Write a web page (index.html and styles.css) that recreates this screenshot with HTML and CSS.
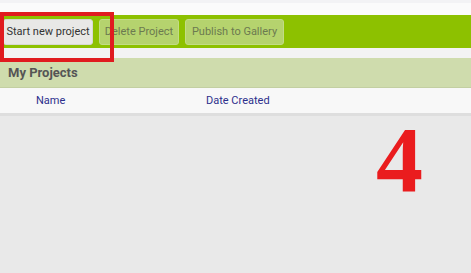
FILE: index.html
```html
<!DOCTYPE html>
<html>
<head>
<meta charset="utf-8">
<link rel="stylesheet" href="styles.css">
</head>
<body>
<div class="page">
  <div class="topstrip"></div>
  <div class="toolbar">
    <button class="btn btn-active">Start new project</button>
    <button class="btn btn-disabled">Delete Project</button>
    <button class="btn btn-disabled">Publish to Gallery</button>
  </div>
  <div class="spacer"></div>
  <div class="section-head">My Projects</div>
  <div class="table-head">
    <span class="col col-name">Name</span>
    <span class="col col-date">Date Created</span>
  </div>
  <div class="content"></div>
  <div class="highlight"></div>
  <div class="step">4</div>
</div>
</body>
</html>
```
FILE: styles.css
```css
html, body {
  margin: 0;
  padding: 0;
}
body {
  background: #e9e9e9;
  font-family: Roboto, "Noto Sans", sans-serif;
  width: 471px;
  height: 273px;
  overflow: hidden;
}
.page {
  position: relative;
  height: 273px;
  display: flex;
  flex-direction: column;
}
.topstrip {
  height: 15px;
  background: #fbfbfb;
  border-top: 3px solid #f3f3f5;
  box-sizing: border-box;
}
.toolbar {
  height: 33px;
  background: #8dc100;
  display: flex;
  align-items: center;
  gap: 6px;
  padding-left: 3px;
  box-sizing: border-box;
}
.btn {
  height: 26px;
  font-family: Roboto, "Noto Sans", sans-serif;
  font-size: 11px;
  border-radius: 3px;
  padding: 0;
  margin: 0;
  white-space: nowrap;
  text-align: center;
  box-sizing: border-box;
}
.btn-active {
  width: 90px;
  background: #e8e8e6;
  color: #333;
  border: 1px solid #d8d8d4;
}
.btn-disabled {
  background: #b5d36e;
  color: #6c7a50;
  border: 1px solid #c2dc86;
}
.btn-disabled:nth-child(2) { width: 80px; }
.btn-disabled:nth-child(3) { width: 99px; }
.spacer {
  height: 10px;
  background: #f3f3f3;
}
.section-head {
  height: 30px;
  background: #cfdcad;
  color: #555;
  font-weight: 700;
  font-size: 13px;
  line-height: 30px;
  padding-left: 8px;
  border-bottom: 1px solid #c3cfa2;
  box-sizing: border-box;
}
.table-head {
  height: 25px;
  background: #f8f8f8;
  display: flex;
  align-items: center;
  font-size: 11px;
  color: #2c2f8c;
  border-bottom: 3px solid #dedede;
  box-sizing: content-box;
}
.col-name {
  margin-left: 36px;
  width: 170px;
}
.content {
  flex: 1;
  background: #e9e9e9;
}
.highlight {
  position: absolute;
  left: 0;
  top: 12px;
  width: 114px;
  height: 50px;
  border: 4px solid #e01b1f;
  box-sizing: border-box;
}
.step {
  position: absolute;
  left: 376px;
  top: 112px;
  font-family: "Liberation Serif", serif;
  font-weight: 700;
  font-size: 94px;
  line-height: 1;
  color: #ea1c1e;
}
```
